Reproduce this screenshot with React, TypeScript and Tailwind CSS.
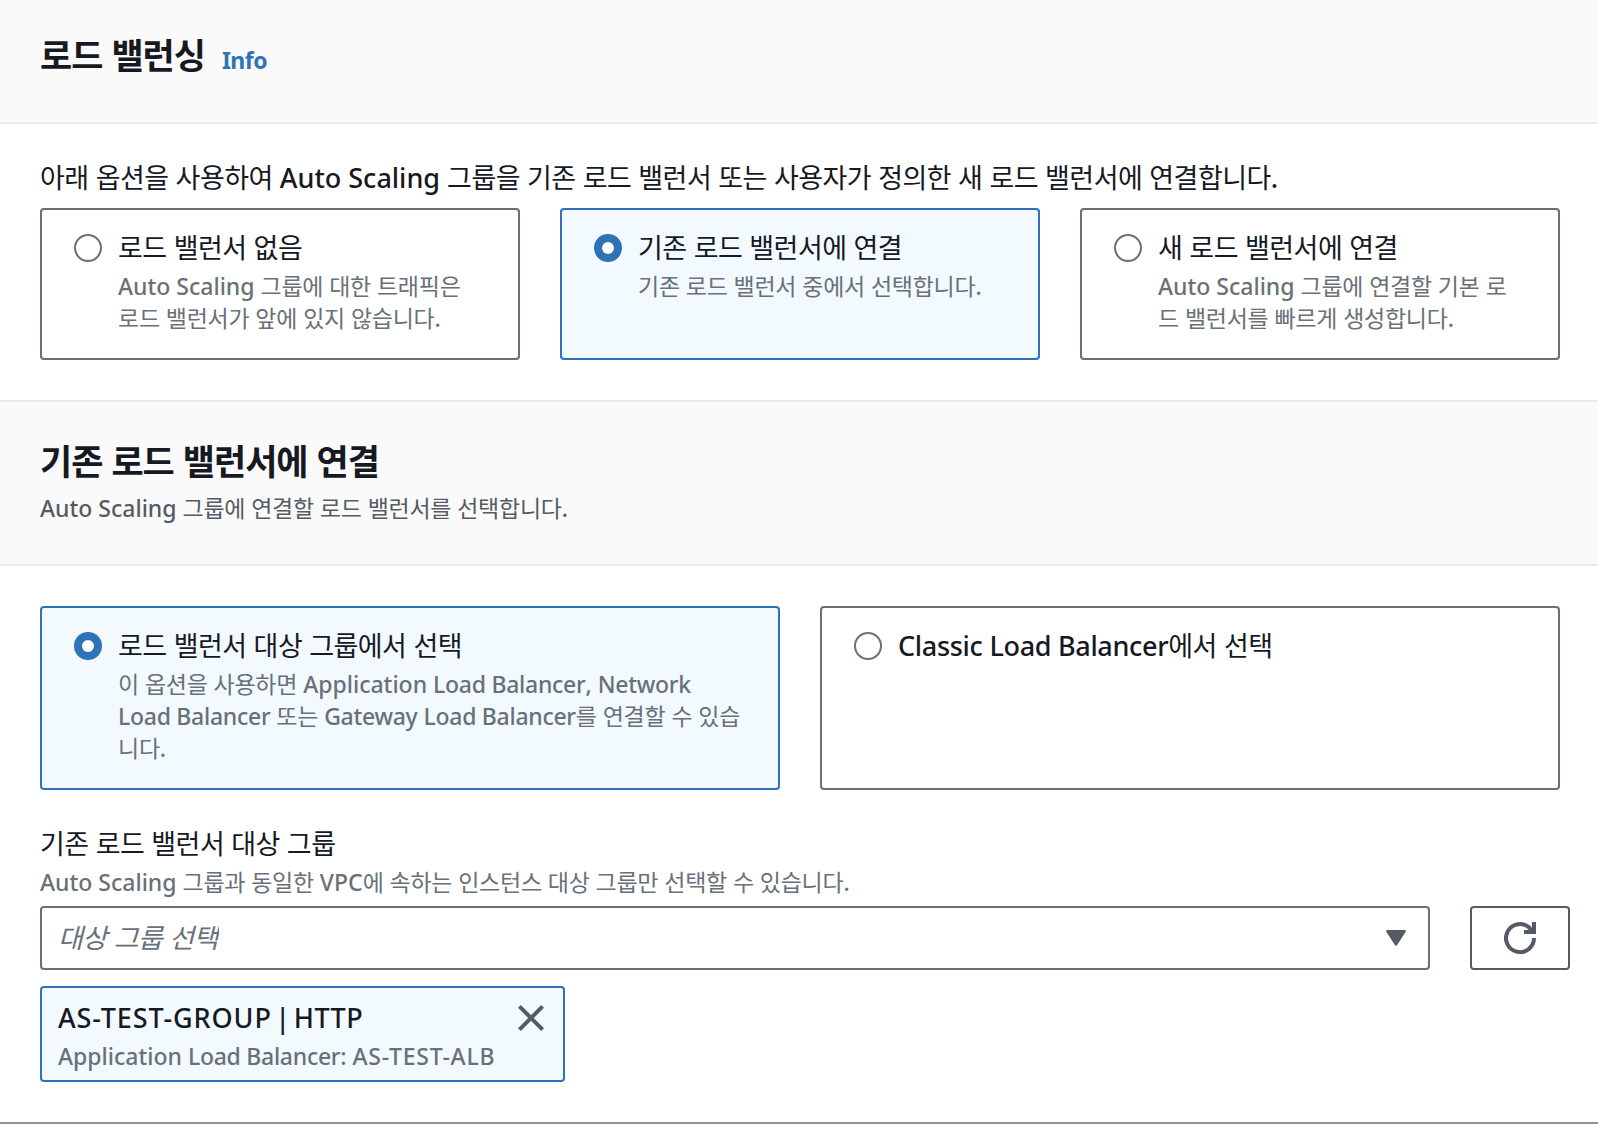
import React from "react";

const LATIN = "font-['Noto_Sans',sans-serif]";
const HANGUL = "font-['Noto_Sans_CJK_KR','Noto_Sans',sans-serif]";

const TOKENS =
  /([가-힣]+|AS-TEST-[A-Z]+|HTTP| \||Network|Classic|Load Balancer|Gateway)/;

function runClass(run: string, hangul: string, latin: string) {
  if (/^[가-힣]/.test(run)) return `${HANGUL} leading-none ${hangul}`;
  if (/^AS-TEST/.test(run)) return `${latin} tracking-[0.033em]`;
  if (run === "HTTP") return `${latin} tracking-[0.018em]`;
  if (run === " |") return `${latin} tracking-[-0.13em]`;
  if (/^(Classic|Load|Gateway|Network)/.test(run)) return `${latin} tracking-[-0.012em]`;
  return latin;
}

function Mixed({
  text,
  latin = "font-medium",
  hangul = "tracking-[-0.02em]",
}: {
  text: string;
  latin?: string;
  hangul?: string;
}) {
  return (
    <>
      {text
        .split(TOKENS)
        .filter(Boolean)
        .map((run, i) => (
          <span key={i} className={runClass(run, hangul, latin)}>
            {run}
          </span>
        ))}
    </>
  );
}

function Small({ text }: { text: string }) {
  return <Mixed text={text} hangul="tracking-[-0.0115em]" />;
}

function Heading({ text }: { text: string }) {
  return (
    <h2 className="text-[35px] leading-[50px] font-bold">
      <Mixed text={text} latin="font-bold" hangul="tracking-[-0.03em]" />
    </h2>
  );
}

function Radio({ checked }: { checked?: boolean }) {
  return checked ? (
    <span className="mt-2.5 flex size-7 shrink-0 items-center justify-center rounded-full bg-[#2e73b8]">
      <span className="size-3 rounded-full bg-white" />
    </span>
  ) : (
    <span className="mt-2.5 size-7 shrink-0 rounded-full border-2 border-[#687078] bg-white" />
  );
}

function Tile({
  title,
  lines = [],
  checked,
}: {
  title: string;
  lines?: string[];
  checked?: boolean;
}) {
  return (
    <label
      className={`flex rounded-[4px] border-2 pt-3.5 pb-6 pl-8 ${
        checked ? "border-[#2e73b8] bg-[#f2f9ff]" : "border-[#687078] bg-white"
      }`}
    >
      <Radio checked={checked} />
      <div className="ml-4 whitespace-pre">
        <div className="pt-0.5 text-[27px] leading-[44px] text-[#16191f]">
          <Mixed text={title} />
        </div>
        {lines.map((line) => (
          <div key={line} className="text-[23px] leading-8 text-[#687078]">
            <Small text={line} />
          </div>
        ))}
      </div>
    </label>
  );
}

export default function App() {
  return (
    <div className={`${LATIN} h-[1124px] w-[1598px] overflow-hidden whitespace-pre border-b-2 border-[#8a9597] bg-white text-[#16191f]`}>
      <header className="flex h-[124px] items-baseline border-b-2 border-[#ebebeb] bg-[#fafafa] px-10 pt-[31px]">
        <Heading text="로드 밸런싱" />
        <a className="ml-[17px] text-[23px] leading-8 font-bold tracking-[-0.02em] text-[#2e73b8]">Info</a>
      </header>

      <section className="px-10 pt-[34px] pb-10">
        <p className="mb-2.5 text-[27px] leading-10">
          <Mixed text="아래 옵션을 사용하여 Auto Scaling 그룹을 기존 로드 밸런서 또는 사용자가 정의한 새 로드 밸런서에 연결합니다." />
        </p>
        <div className="grid w-[1520px] grid-cols-3 gap-10">
          <Tile title="로드 밸런서 없음" lines={["Auto Scaling 그룹에 대한 트래픽은", "로드 밸런서가 앞에 있지 않습니다."]} />
          <Tile checked title="기존 로드 밸런서에 연결" lines={["기존 로드 밸런서 중에서 선택합니다."]} />
          <Tile title="새 로드 밸런서에 연결" lines={["Auto Scaling 그룹에 연결할 기본 로", "드 밸런서를 빠르게 생성합니다."]} />
        </div>
      </section>

      <header className="h-[166px] border-y-2 border-[#ebebeb] bg-[#fafafa] px-10 pt-[35px]">
        <Heading text="기존 로드 밸런서에 연결" />
        <p className="mt-[5px] text-[23px] leading-8 text-[#545b64]">
          <Small text="Auto Scaling 그룹에 연결할 로드 밸런서를 선택합니다." />
        </p>
      </header>

      <section className="px-10 pt-10">
        <div className="grid w-[1520px] grid-cols-2 gap-10">
          <Tile
            checked
            title="로드 밸런서 대상 그룹에서 선택"
            lines={[
              "이 옵션을 사용하면 Application Load Balancer, Network",
              "Load Balancer 또는 Gateway Load Balancer를 연결할 수 있습",
              "니다.",
            ]}
          />
          <Tile title="Classic Load Balancer에서 선택" />
        </div>

        <div className="mt-[34px] text-[27px] leading-10">
          <Mixed text="기존 로드 밸런서 대상 그룹" />
        </div>
        <div className="mt-0.5 text-[23px] leading-8 text-[#687078]">
          <Small text="Auto Scaling 그룹과 동일한 VPC에 속하는 인스턴스 대상 그룹만 선택할 수 있습니다." />
        </div>

        <div className="mt-2 flex w-[1530px] gap-10">
          <div className="flex h-16 flex-1 items-center justify-between rounded-[4px] border-2 border-[#687078] bg-white pr-[22px] pl-4">
            <span className="overflow-hidden pr-px text-[27px] leading-10 text-[#687078] italic">
              <Mixed text="대상 그룹 선택" />
            </span>
            <svg width="20" height="16" viewBox="0 0 20 16" fill="#545b64">
              <path d="M1 0h18q1.4.4.7 1.8L11 15.2q-1 1.3-2 0L.3 1.8Q-.4.4 1 0z" />
            </svg>
          </div>
          <button className="flex h-16 w-[100px] items-center justify-center rounded-[4px] border-2 border-[#545b64] bg-white">
            <svg width="32" height="32" viewBox="0 0 32 32" fill="none" stroke="#545b64" strokeWidth="4">
              <path d="M30 16a14 14 0 1 1-4.5-10.2L28 9" />
              <path d="M30 0v10H20" />
            </svg>
          </button>
        </div>

        <div className="mt-4 flex w-[525px] justify-between rounded-[4px] border-2 border-[#2e73b8] bg-[#f2f9ff] pt-2.5 pr-[19px] pb-2 pl-4">
          <div>
            <div className="text-[27px] leading-10">
              <Mixed text="AS-TEST-GROUP | HTTP" />
            </div>
            <div className="mt-0.5 text-[23px] leading-8 text-[#687078]">
              <Small text="Application Load Balancer: AS-TEST-ALB" />
            </div>
          </div>
          <svg className="mt-[7px]" width="26" height="26" viewBox="0 0 26 26" stroke="#545b64" strokeWidth="4">
            <path d="M1.4 1.4l23.2 23.2M24.6 1.4L1.4 24.6" />
          </svg>
        </div>
      </section>
    </div>
  );
}
